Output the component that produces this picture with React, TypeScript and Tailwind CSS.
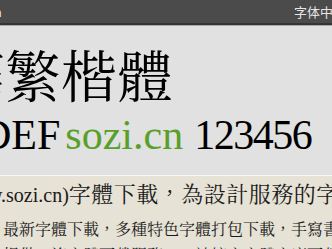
export default function App() {
  const serif = { fontFamily: '"Liberation Serif", "Noto Serif CJK TC", "Noto Sans CJK TC", serif' };
  return (
    <div className="w-[332px] h-[249px] overflow-hidden flex flex-col bg-[#e1e1e1]">
      {/* top bar */}
      <div className="h-[25px] shrink-0 bg-[#4b4b4b] border-b-2 border-[#353535] flex items-center justify-between overflow-hidden whitespace-nowrap">
        <span className="-ml-[13px] text-[13px] text-white font-['Noto_Sans_CJK_SC',sans-serif]">cn</span>
        <span className="-mr-[14px] text-[13px] text-[#e6e6e6] font-['Noto_Sans_CJK_SC',sans-serif]">字体中国</span>
      </div>
      <div className="h-px shrink-0 bg-[#a9a9a9]" />

      {/* font preview */}
      <div className="h-[149px] shrink-0 bg-[#e1e1e1] overflow-hidden whitespace-nowrap">
        <div
          className="mt-[19px] -ml-[51px] text-[56px] leading-none text-black"
          style={{ fontFamily: '"AR PL UKai TW", "TW-Kai", "Noto Serif CJK TC", "Noto Sans CJK TC", serif' }}
        >
          華繁楷體
        </div>
        <div className="mt-[13px] -ml-[19px] text-[42px] leading-none text-black" style={serif}>
          <span>DEF</span>
          <span className="ml-[5px] text-[#58a02a]">sozi.cn</span>
          <span className="ml-[11px] tracking-[-1.5px]">123456</span>
        </div>
      </div>
      <div className="h-px shrink-0 bg-[#f7f7f7]" />

      {/* description */}
      <div className="flex-1 bg-[#e6e2d5] text-[#1a1a1a] overflow-hidden whitespace-nowrap" style={serif}>
        <div className="mt-[5px] -ml-[41px] text-[22px] tracking-[0.5px] leading-[28px]">
          <span className="text-[20px] tracking-normal">www.sozi.cn)</span>字體下載，為設計服務的字體網站
        </div>
        <div className="mt-[11px] ml-[3px] text-[16px] leading-[20px]">
          最新字體下載，多種特色字體打包下載，手寫書法字體
        </div>
        <div className="mt-[6px] ml-[3px] text-[16px] leading-[20px]">
          提供一流字體下載服務，一站搞定字體字庫下載
        </div>
      </div>
    </div>
  );
}
